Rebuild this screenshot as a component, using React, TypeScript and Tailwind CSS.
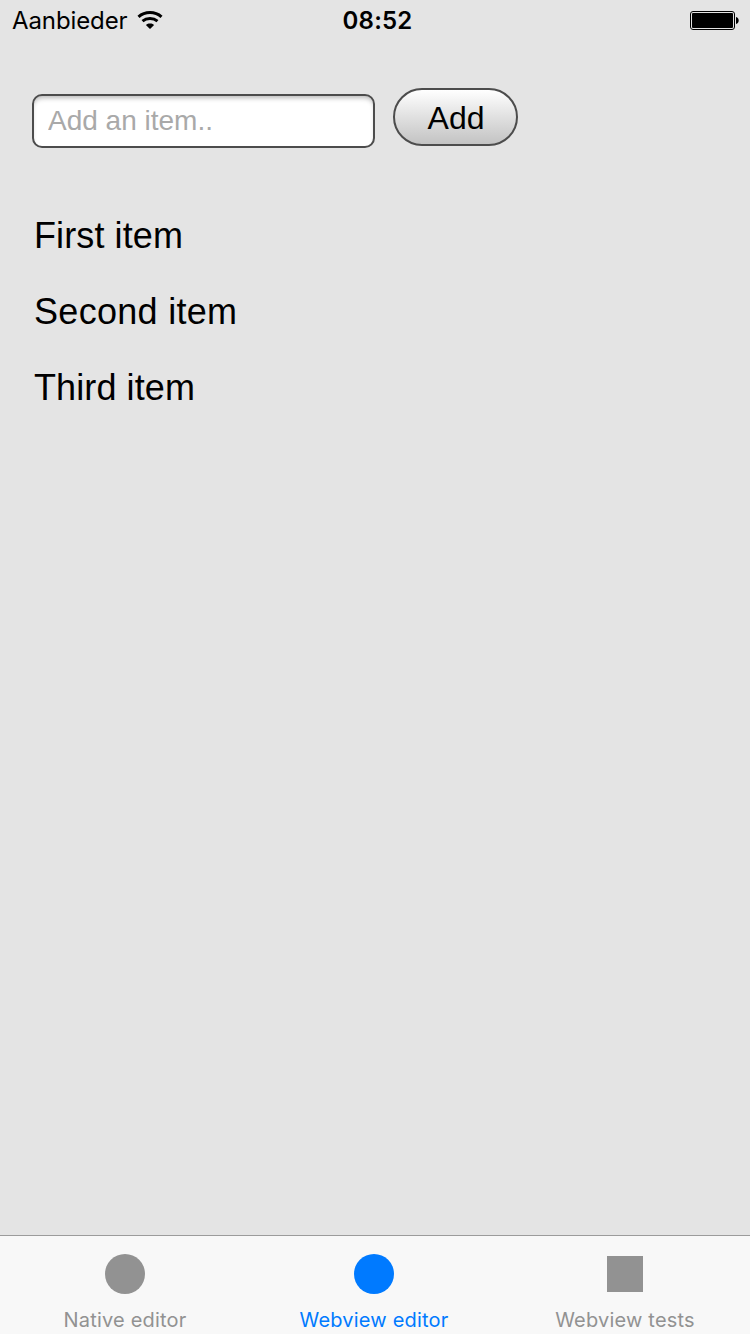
import { useState } from "react";

const items = [
  { label: "First item", tracking: "tracking-[0.1px]" },
  { label: "Second item", tracking: "tracking-[0.3px]" },
  { label: "Third item", tracking: "tracking-[0.1px]" },
];

function WifiIcon() {
  return (
    <svg width="26" height="20" viewBox="0 0 26 20" fill="none" className="mb-[2px] ml-[9px]">
      <path d="M1.5 6.8C8 1.1 18 1.1 24.5 6.8" stroke="#000" strokeWidth="3.1" />
      <path d="M5.5 11.2C9.7 7.6 16.3 7.6 20.5 11.2" stroke="#000" strokeWidth="2.9" />
      <path d="M13 19L9.1 15.2C9.1 12.9 16.9 12.9 16.9 15.2Z" fill="#000" />
    </svg>
  );
}

function BatteryIcon() {
  return (
    <svg width="50" height="19" viewBox="0 0 50 19" className="mb-[2px]">
      <rect x="0.5" y="0.5" width="44" height="18" rx="2.5" fill="none" stroke="#000" />
      <rect x="2" y="2" width="41" height="15" rx="1" fill="#000" />
      <path d="M46 6C49.6 6.8 49.6 12.2 46 13Z" fill="#000" />
    </svg>
  );
}

function StatusBar() {
  return (
    <header className="grid h-10 grid-cols-3 items-center pt-px font-['Inter',sans-serif] text-[24px] leading-10 text-black">
      <div className="flex items-center pl-3">
        <span className="tracking-[-0.1px]">Aanbieder</span>
        <WifiIcon />
      </div>
      <div className="pl-[5px] text-center font-semibold tracking-[0.2px]">08:52</div>
      <div className="flex justify-end pr-[10px]">
        <BatteryIcon />
      </div>
    </header>
  );
}

const tabs = [
  { label: "Native editor", square: false },
  { label: "Webview editor", square: false },
  { label: "Webview tests", square: true },
];

export default function App() {
  const [active, setActive] = useState(1);
  return (
    <div className="flex h-[1334px] w-[750px] flex-col overflow-hidden bg-[#e4e4e4]">
      <StatusBar />
      <main className="flex-1 pt-12 font-['Liberation_Sans',Arial,sans-serif] text-black">
        <div className="flex items-start gap-[18px] pl-8">
          <input
            type="text"
            placeholder="Add an item.."
            className="mt-[6px] h-[54px] w-[343px] rounded-[10px] border-2 border-[#4c4c4c] bg-white px-[14px] text-[28px] shadow-[inset_0_4px_5px_-2px_rgba(0,0,0,0.28)] outline-none placeholder:text-[#a9a9a9]"
          />
          <button className="h-[58px] w-[125px] rounded-[29px] border-2 border-[#4c4c4c] bg-linear-to-b from-white to-[#c3c3c3] pt-[2px] pl-px text-[32px] leading-[52px]">
            Add
          </button>
        </div>
        <ul className="flex flex-col pt-[50px] pl-[34px] text-[36px] leading-[76px]">
          {items.map((item) => (
            <li key={item.label} className={item.tracking}>
              {item.label}
            </li>
          ))}
        </ul>
      </main>
      <nav className="grid h-[99px] grid-cols-[250px_248px_254px] border-t border-[#9b9b9b] bg-[#f8f8f8] font-['Inter',sans-serif]">
        {tabs.map((tab, i) => (
          <button
            key={tab.label}
            onClick={() => setActive(i)}
            className={`flex flex-col items-center justify-start pt-[18px] ${active === i ? "text-[#007aff]" : "text-[#929292]"}`}
          >
            <span className="flex h-10 items-center">
              <span className={`block bg-current ${tab.square ? "h-9 w-9" : "h-10 w-10 rounded-full"}`} />
            </span>
            <span className="mt-3 text-[20px] leading-[28px] tracking-[0.2px]">{tab.label}</span>
          </button>
        ))}
      </nav>
    </div>
  );
}
